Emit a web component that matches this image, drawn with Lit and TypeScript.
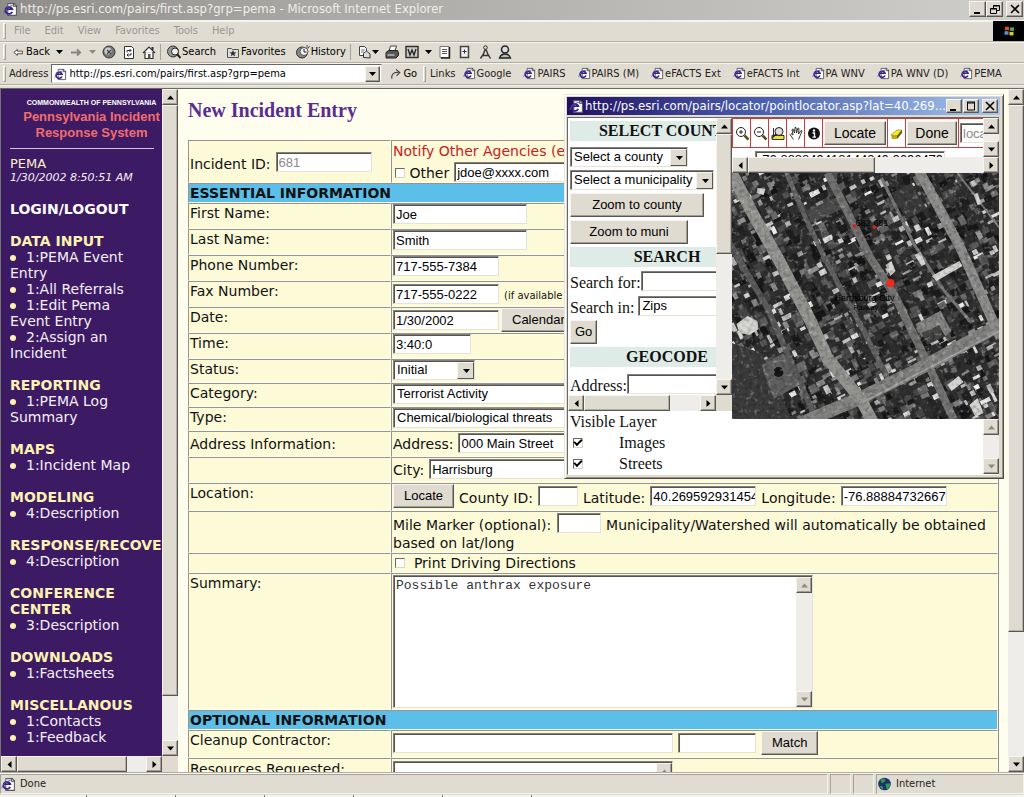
import { LitElement, html, svg, css, nothing } from "lit";
import { customElement, property } from "lit/decorators.js";
import { classMap } from "lit/directives/class-map.js";

/* ---------- shared look ---------- */

const base = css`
  * { box-sizing: border-box; }
  button, input, select, textarea { margin: 0; border-radius: 0; outline: none; color: #000; }
  button {
    font: 13px/16px "Liberation Sans", Arial, sans-serif;
    background: #e0dbd1;
    border: 1px solid;
    border-color: #f8f5f0 #5a5753 #5a5753 #f8f5f0;
    box-shadow: inset -1px -1px #a19c94;
    padding: 0;
    white-space: nowrap;
    flex: none;
  }
  .field, select {
    font: 13px/16px "Liberation Sans", Arial, sans-serif;
    background: #fff;
    height: 20px;
    padding: 1px 0 0 2px;
    border: 1px solid;
    border-color: #84817c #e6e3d6 #e6e3d6 #84817c;
    box-shadow: inset 1px 1px #55524f;
    flex: none;
  }
  select { appearance: none; width: 100%; padding: 0 18px 0 3px; }
  .pick { position: relative; isolation: isolate; display: inline-flex; flex: none; }
  .pick::after {
    content: "";
    position: absolute;
    top: 2px; right: 1px; bottom: 1px;
    width: 15px;
    border: 1px solid;
    border-color: #f8f5f0 #5a5753 #5a5753 #f8f5f0;
    background: #e0dbd1;
    pointer-events: none;
  }
  .pick svg { position: absolute; right: 5px; top: 9px; z-index: 1; pointer-events: none; }
  input[type="checkbox"] {
    appearance: none;
    width: 10px; height: 10px;
    background: #fff;
    border: 1px solid;
    border-color: #6c6964 #d8d5c9 #d8d5c9 #6c6964;
    display: inline-grid;
    place-content: center;
    flex: none;
  }
  input[type="checkbox"]:checked::after {
    content: "";
    width: 6px; height: 3px;
    border: solid #000;
    border-width: 0 0 2px 2px;
    transform: rotate(-45deg);
    margin-bottom: 2px;
  }
`;

const caret = (color = "#000") => html`<svg width="7" height="4" viewBox="0 0 7 4"><path d="M0 0h7L3.5 4z" fill=${color}/></svg>`;

const pageIcon = (size = 14) => html`<svg width=${size} height=${size} viewBox="0 0 14 14">
  <path d="M4.5 1.5h6l2 2v9h-8z" fill="#fff" stroke="#5b5b66"/><path d="M10 1v3h3" fill="none" stroke="#444"/>
  <path d="M8.6 9.2A3.3 3.3 0 1 1 8.7 6.7H3.4" fill="none" stroke="#34218a" stroke-width="1.7"/>
  <path d="M.8 10.5C1.5 7 5 3.6 9 3.3" fill="none" stroke="#5b4bb0" stroke-width=".9"/></svg>`;

/* ---------- scroll bar ---------- */

@customElement("win-scroll")
class WinScroll extends LitElement {
  @property({ type: Boolean, reflect: true }) horizontal = false;
  @property({ type: Boolean }) inactive = false;
  /** share of the track the thumb fills; 0 hides it */
  @property({ type: Number }) thumb = 0;

  static styles = [base, css`
    :host { display: flex; flex-direction: column; width: 16px; flex: none; background: #efedea; min-height: 0; }
    :host([horizontal]) { flex-direction: row; width: auto; height: 16px; min-width: 0; }
    button { width: 16px; height: 16px; display: grid; place-content: center; }
    svg { display: block; }
    .track { flex: 1; display: flex; flex-direction: inherit; min-height: 0; min-width: 0; }
    .thumb {
      background: #e0dbd1;
      border: 1px solid;
      border-color: #f8f5f0 #5a5753 #5a5753 #f8f5f0;
      box-shadow: inset -1px -1px #b4afa6;
    }
  `];

  private arrow(turn: number) {
    return html`<svg width="7" height="7" viewBox="0 0 7 7"><path d="M0 5.5h7L3.5 1.5z"
      fill=${this.inactive ? "#8d8983" : "#000"} transform=${`rotate(${turn} 3.5 3.5)`}/></svg>`;
  }

  render() {
    const size = `flex-basis:${this.thumb}%`;
    return html`
      <button aria-label=${this.horizontal ? "Scroll left" : "Scroll up"}>${this.arrow(this.horizontal ? -90 : 0)}</button>
      <div class="track">${this.thumb ? html`<div class="thumb" style=${size}></div>` : nothing}</div>
      <button aria-label=${this.horizontal ? "Scroll right" : "Scroll down"}>${this.arrow(this.horizontal ? 90 : 180)}</button>`;
  }
}

/* ---------- sidebar ---------- */

const MENU: { title: string; items: string[] }[] = [
  { title: "DATA INPUT", items: ["1:PEMA Event Entry", "1:All Referrals", "1:Edit Pema Event Entry", "2:Assign an Incident"] },
  { title: "REPORTING", items: ["1:PEMA Log Summary"] },
  { title: "MAPS", items: ["1:Incident Map"] },
  { title: "MODELING", items: ["4:Description"] },
  { title: "RESPONSE/RECOVE", items: ["4:Description"] },
  { title: "CONFERENCE CENTER", items: ["3:Description"] },
  { title: "DOWNLOADS", items: ["1:Factsheets"] },
  { title: "MISCELLANOUS", items: ["1:Contacts", "1:Feedback"] },
];

@customElement("side-menu")
class SideMenu extends LitElement {
  static styles = [base, css`
    :host { display: grid; grid-template-columns: 1fr 16px; grid-template-rows: 1fr 16px; width: 178px; flex: none; min-height: 0; border-left: 1px solid #77736e; }
    nav {
      background: #3c1a64; color: #f6f0f8; overflow: hidden; padding: 8px 0 0 9px;
      font: 14px/16px "DejaVu Sans", Verdana, sans-serif;
    }
    .brand { font: bold 13px/16px "Liberation Sans", Arial, sans-serif; color: #f26d6d; text-align: center; padding-left: 11px; white-space: nowrap; }
    .state { color: #fff; font-size: 7px; line-height: 12px; }
    hr { height: 1px; border: 0; background: #cfc4dd; margin: 7px 8px 7px 0; }
    .who { color: #fdf3c8; font-size: 13px; }
    .when { font-size: 11px; line-height: 12px; font-style: italic; }
    a { color: inherit; text-decoration: none; }
    h2 { font-size: 14px; line-height: inherit; margin: 16px 0 0; color: #fdf3b0; }
    h2.login { color: #fff; margin-top: 17px; }
    ul { list-style: none; margin: 0; padding: 0 16px 0 0; }
    li::before { content: ""; display: inline-block; width: 6px; height: 6px; border-radius: 3px; background: #fdf3b0; margin: 0 10px 1px 0; }
    .corner { background: #e0dbd1; }
  `];
  render() {
    return html`
      <nav>
        <div class="brand"><div class="state">COMMONWEALTH OF PENNSYLVANIA</div>Pennsylvania Incident<br>Response System</div>
        <hr>
        <div class="who">PEMA</div>
        <div class="when">1/30/2002 8:50:51 AM</div>
        <h2 class="login"><a href="#login">LOGIN/LOGOUT</a></h2>
        ${MENU.map((g) => html`<h2>${g.title}</h2>
          <ul>${g.items.map((i) => html`<li><a href="#item">${i}</a></li>`)}</ul>`)}
      </nav>
      <win-scroll thumb="93"></win-scroll>
      <win-scroll horizontal thumb="85"></win-scroll>
      <div class="corner"></div>`;
  }
}

/* ---------- incident form ---------- */

@customElement("incident-form")
class IncidentForm extends LitElement {
  static styles = [base, css`
    :host { display: block; flex: 1; min-width: 0; overflow: hidden; background: #fffdee; padding: 12px 9px 0 10px; font: 14px/18px "DejaVu Sans", Verdana, sans-serif; color: #111; }
    h1 { margin: 0 0 20px; font: bold 20px/19px "Liberation Serif", "Times New Roman", serif; color: #5a2d91; }
    form { border-right: 1px solid #8f8d84; }
    .row { display: grid; grid-template-columns: 203px minmax(0, 1fr); }
    .cell { border: 1px solid; border-color: #96948b #fffef4 #fffef4 #96948b; background: #fdfad8; min-height: 26px; padding: 0 1px; min-width: 0; }
    .mid { display: flex; align-items: center; }
    .line { display: flex; align-items: center; gap: 5px; white-space: nowrap; }
    .line > label, .line > span { padding-top: 3px; }
    .slim .cell { min-height: 24px; }
    .wide .cell { min-height: 28px; }
    .tiny .cell { min-height: 20px; }
    .tiny .line > span { padding-top: 0; }
    .top { min-height: 43px; }
    .top .cell { padding-top: 1px; }
    .tall .cell { min-height: 41px; padding-top: 1px; }
    .big .cell { min-height: 137px; }
    h2 { margin: 0; font: bold 14px/18px "DejaVu Sans", Verdana, sans-serif; background: #5bbfea; border: 1px solid; border-color: #96948b #fffef4 #fffef4 #96948b; padding: 0 1px; }
    .warn { color: #c8201e; white-space: nowrap; line-height: 19px; }
    .line > .small { font-size: 10px; padding-top: 5px; }
    .w44 { width: 44px; } .w40 { width: 40px; } .w78 { width: 78px; } .w96 { width: 96px; } .w106 { width: 106px; }
    .w134 { width: 134px; } .w280 { width: 280px; } .w240 { width: 240px; } .w82 { width: 82px; }
    .off { color: #8a8a8a; }
    .btn { height: 24px; padding: 0 10px; }
    .tight { gap: 2px; }
    .area { display: flex; width: 420px; height: 133px; margin-top: 1px; background: #fff; border: 1px solid; border-color: #84817c #e6e3d6 #e6e3d6 #84817c; box-shadow: inset 1px 1px #55524f; padding: 1px 0 0 1px; }
    .short { width: 280px; height: 60px; }
    textarea { flex: 1; min-width: 0; resize: none; border: 0; padding: 1px; background: none; overflow: hidden; font: 13px/16px "Liberation Mono", "Courier New", monospace; color: #333; }
    .mile { vertical-align: text-bottom; margin: 0 1px; }
    .pad { padding-left: 2px; }
  `];

  private row(id: string, label: string, body: unknown, kind = "", mid = false) {
    return html`<div class="row ${kind}">
      <div class=${classMap({ cell: true, mid })}>${label ? html`<label for=${id}>${label}</label>` : nothing}</div>
      <div class="cell">${body}</div></div>`;
  }

  private text(id: string, width: string, value = "", name = "") {
    return html`<input class="field ${width}" id=${id} .value=${value} aria-label=${name || nothing}>`;
  }

  private pick(id: string, width: string, value: string) {
    return html`<span class="pick ${width}"><select id=${id}><option>${value}</option></select>${caret()}</span>`;
  }

  render() {
    return html`
      <h1>New Incident Entry</h1>
      <form @submit=${(e: Event) => e.preventDefault()}>
        <div class="row top">
          <div class="cell mid"><div class="line"><label for="iid">Incident ID:</label><input class="field w96 off" id="iid" readonly .value=${"681"}></div></div>
          <div class="cell">
            <div class="warn">Notify Other Agencies (e</div>
            <div class="line"><span class="pad"><input type="checkbox" id="other"> <label for="other">Other</label></span>${this.text("mail", "w134", "jdoe@xxxx.com", "Other agency email")}</div>
          </div>
        </div>
        <h2>ESSENTIAL INFORMATION</h2>
        ${this.row("first", "First Name:", this.text("first", "w134", "Joe"))}
        ${this.row("last", "Last Name:", this.text("last", "w134", "Smith"))}
        ${this.row("phone", "Phone Number:", this.text("phone", "w106", "717-555-7384"))}
        ${this.row("fax", "Fax Number:", html`<div class="line">${this.text("fax", "w106", "717-555-0222")}<span class="small">(if available</span></div>`)}
        ${this.row("date", "Date:", html`<div class="line tight">${this.text("date", "w106", "1/30/2002")}<button class="btn" type="button">Calendar</button></div>`)}
        ${this.row("time", "Time:", this.text("time", "w78", "3:40:0"))}
        ${this.row("status", "Status:", this.pick("status", "w82", "Initial"), "slim")}
        ${this.row("cat", "Category:", this.pick("cat", "w240", "Terrorist Activity"), "slim")}
        ${this.row("type", "Type:", this.pick("type", "w240", "Chemical/biological threats"), "slim")}
        ${this.row("addr", "Address Information:", html`<div class="line"><label for="addr">Address:</label>${this.text("addr", "w134", "000 Main Street")}</div>`, "", true)}
        ${this.row("city", "", html`<div class="line"><label for="city">City:</label>${this.text("city", "w240", "Harrisburg")}</div>`, "")}
        ${this.row("county", "Location:", html`<div class="line"><button class="btn" type="button">Locate</button>
          <label for="county">County ID:</label>${this.text("county", "w40")}
          <label for="lat">Latitude:</label>${this.text("lat", "w106", "40.269592931454")}
          <label for="lon">Longitude:</label>${this.text("lon", "w106", "-76.88884732667000")}</div>`, "wide")}
        ${this.row("mile", "", html`<label for="mile">Mile Marker (optional):</label>
          <input class="field w44 mile" id="mile"> Municipality/Watershed will automatically be obtained based on lat/long`, "tall")}
        ${this.row("dir", "", html`<div class="line"><span class="pad"><input type="checkbox" id="dir">&nbsp; <label for="dir">Print Driving Directions</label></span></div>`, "tiny")}
        ${this.row("sum", "Summary:", html`<div class="area"><textarea id="sum" .value=${"Possible anthrax exposure"}></textarea><win-scroll inactive></win-scroll></div>`, "big")}
        <h2>OPTIONAL INFORMATION</h2>
        ${this.row("clean", "Cleanup Contractor:", html`<div class="line">${this.text("clean", "w280")}${this.text("code", "w78", "", "Contractor code")}<button class="btn" type="button">Match</button></div>`, "wide")}
        ${this.row("res", "Resources Requested:", html`<div class="area short"><textarea id="res"></textarea><win-scroll inactive></win-scroll></div>`, "tall")}
      </form>`;
  }
}

/* ---------- aerial map ---------- */

type Street = { d: string; w: number; c: string };
const STREETS: Street[] = [
  { d: "M53-5 72 40 93 85 129 152 156 205", w: 5, c: "#626261" },
  { d: "M150 5 183 72 213 118 240 150", w: 3, c: "#757574" },
  { d: "M-2 70 36 135 60 190 82 240", w: 6, c: "#5a5a5a" },
  { d: "M226 0 268 55", w: 2, c: "#828281" },
  { d: "M96 0 109 25 139 85 163 122 196 190 222 246", w: 8, c: "#727271" },
  { d: "M70 250 129 225 193 193 270 151", w: 13, c: "#828280" },
  { d: "M186-5 229 75 269 165", w: 10, c: "#8c8c8a" },
  { d: "M-4-8 22 42 49 90 79 148 96 185 129 226 142 250", w: 12, c: "#92928f" },
];

function buildings() {
  let seed = 20021;
  const rnd = () => ((seed = (seed * 1103515245 + 12345) % 2147483648) / 2147483648);
  const out: unknown[] = [];
  for (let u = -200; u < 330; u += 9) {
    for (let v = -60; v < 360; v += 7) {
      const a = -0.47;
      const x = u * Math.cos(a) - v * Math.sin(a) + (rnd() - 0.5) * 6;
      const y = u * Math.sin(a) + v * Math.cos(a) + (rnd() - 0.5) * 6;
      const r = rnd(), w = 4 + rnd() * 7, h = 3 + rnd() * 5, t = rnd();
      const turn = rnd() < 0.75 ? -27 : 63;
      if (x < -8 || y < -8 || x > 276 || y > 254) continue;
      const g = r < 0.46 ? 22 + t * 28 : r < 0.7 ? 66 + t * 44 : r < 0.86 ? 110 + t * 50 : 180 + t * 65;
      out.push(svg`<rect x=${x.toFixed(1)} y=${y.toFixed(1)} width=${w.toFixed(1)} height=${(r > 0.7 ? h * 0.7 : h + 2).toFixed(1)}
        fill=${`rgb(${g | 0},${g | 0},${g | 0})`} transform=${`rotate(${turn} ${x.toFixed(1)} ${y.toFixed(1)})`}/>`);
    }
  }
  return out;
}

const ROOFS = [
  "M5 151 16 143 26 148 27 156 18 162 8 160z", "M200 103 228 88 231 93 205 108z", "M182 53 187 51 190 56 185 59z",
  "M216 212 227 203 232 209 220 218z", "M26 15 34 16 32 22 25 20z", "M154 92 160 88 164 98 159 103z",
  "M242 21 246 20 250 31 246 32z", "M183 82 189 79 194 91 190 93z", "M238 232 246 225 252 240 244 244z",
];

const aerial = html`<svg class="map" viewBox="0 0 268 246" preserveAspectRatio="xMidYMid slice" role="img" aria-label="Aerial map of Harrisburg">
  <defs>
    <filter id="grain" x="0" y="0" width="100%" height="100%"><feTurbulence type="fractalNoise" baseFrequency=".24" numOctaves="3" seed="4"/>
      <feColorMatrix values="0 0 0 0 0  0 0 0 0 0  0 0 0 0 0  3 0 0 0 -1.3"/></filter>
    <filter id="spark" x="0" y="0" width="100%" height="100%"><feTurbulence type="fractalNoise" baseFrequency=".22" numOctaves="2" seed="9"/>
      <feColorMatrix values="0 0 0 0 .7  0 0 0 0 .7  0 0 0 0 .7  0 4 0 0 -2.3"/></filter>
    <filter id="soft"><feGaussianBlur stdDeviation=".5"/></filter>
  </defs>
  <rect width="268" height="246" fill="#303030"/>
  <g filter="url(#soft)">
    ${buildings()}
    <path d="M160 20 180 10 195 35 175 46z M0 170 30 180 60 246 0 246z" fill="#3a3a3a"/>
    <path d="M74 38 106 24 110 36 80 50z" fill="#4c4c4c"/>
    <path d="M30 192 52 180 68 212 42 226z" fill="#5e5e5e"/><circle cx="47" cy="199" r="5" fill="#151515"/>
    ${STREETS.map((s) => svg`<path d=${s.d} fill="none" stroke=${s.c} stroke-width=${s.w}/>`)}
    <path d="M184 151 209 138 220 158 214 163 208 154 190 164z" fill="#828280"/><path d="M190 160 208 152 212 164 196 172z" fill="#444"/>
    <path d="M132 229 270 157" stroke="#a8a8a6" stroke-width="1.5"/>
    <path d=${ROOFS.join(" ")} fill="#d6d6d3"/>
  </g>
  <rect width="268" height="246" filter="url(#grain)" opacity=".2"/>
  <rect width="268" height="246" filter="url(#spark)" opacity=".35"/>
  <circle cx="123" cy="53" r="2" fill="#d3222a"/><circle cx="143" cy="54" r="2" fill="#d3222a"/>
  <circle cx="159" cy="110" r="4" fill="#f2281c"/>
  <g font-family="Liberation Sans, sans-serif" font-size="9" fill="#000"><text x="124" y="53">682</text><text x="142" y="53">681</text>
  <text x="103" y="128">Harrisburg City</text><text x="122" y="137" font-size="7">Railway</text></g>
</svg>`;

/* ---------- locator window ---------- */

const TOOLS = [
  { name: "Zoom in", art: svg`<circle cx="6" cy="6" r="4.5" fill="#fff" stroke="#222"/><path d="M4 6h4M6 4v4" stroke="#222"/><path d="m9.5 9.5 4 4" stroke="#5a4a10" stroke-width="2.5"/>` },
  { name: "Zoom out", art: svg`<circle cx="6" cy="6" r="4.5" fill="#fff" stroke="#222"/><path d="M4 6h4" stroke="#222"/><path d="m9.5 9.5 4 4" stroke="#5a4a10" stroke-width="2.5"/>` },
  { name: "Full extent", art: svg`<path d="M1 9.5h12v4H1z" fill="#f5e12c" stroke="#333"/><path d="M2.5 2v8" stroke="#333"/><circle cx="8" cy="5.5" r="4" fill="#ddd" stroke="#222"/><path d="m5 8-4 4" stroke="#222" stroke-width="1.5"/>` },
  { name: "Pan", art: svg`<path d="M4.5 13.5 1 8.5l1-1 2 1.5L3 3.5l1-.5 1.5 4L6 1.5h1L7.5 7 9 2l1 .5L9.5 8 12 4.5l1 .5-2 5-1.5 3.5" fill="#fff" stroke="#222" stroke-width=".9"/>` },
  { name: "Identify", art: svg`<circle cx="7" cy="7.5" r="6" fill="#111"/><circle cx="7" cy="4.5" r="1.2" fill="#fff"/><path d="M5.5 7h2v4M5.5 11.2H9" stroke="#fff" stroke-width="1.3" fill="none"/>` },
];

@customElement("locator-window")
class LocatorWindow extends LitElement {
  static styles = [base, css`
    :host {
      display: flex; flex-direction: column; background: #e0dbd1; padding: 2px 3px 3px 2px;
      border: 1px solid; border-color: #e9e5dc #4c4946 #4c4946 #e9e5dc; box-shadow: inset 1px 1px #fff, inset -1px -1px #98948c;
      font: 16px/20px "Liberation Serif", "Times New Roman", serif; color: #111;
    }
    .title { display: flex; align-items: center; gap: 1px; height: 18px; flex: none; padding: 0 2px; color: #fff; background: linear-gradient(90deg, #211060, #4a5fae 45%, #a9c8ee);
      font: 13px/16px "DejaVu Sans Condensed", Tahoma, sans-serif; }
    .title .name { flex: 1; min-width: 0; white-space: nowrap; }
    .title button { width: 16px; height: 14px; display: grid; place-content: center; }
    .title button:last-child { margin-left: 2px; }
    .body { flex: 1; display: grid; grid-template-columns: 164px minmax(0, 1fr); min-height: 0; margin: 2px 1px 0 0; background: #fff; border: 1px solid; border-color: #6b6863 #fff #fff #6b6863; border-right: 0; }
    .col { display: flex; flex-direction: column; min-width: 0; min-height: 0; }
    .side { display: grid; grid-template-columns: minmax(0, 1fr) 16px; grid-template-rows: 277px 16px; }
    .pane { overflow: hidden; padding: 3px 0 0 2px; }
    .inner { width: 194px; display: flex; flex-direction: column; align-items: flex-start; gap: 3px; }
    .inner h3 { margin: 0; width: 100%; background: #dfebe7; text-align: center; font: bold 16px/20px "Liberation Serif", serif; }
    .inner .gap { margin-top: 3px; }
    .inner select { height: 20px; }
    .entry { display: flex; align-items: center; height: 22px; }
    .entry label { padding-top: 4px; }
    .entry .spaced { margin-left: 4px; }
    .w118 { width: 118px; } .w144 { width: 144px; } .w134 { width: 134px; }
    .btn { height: 24px; padding: 0 4px; }
    .corner { background: #e0dbd1; }
    .layers { padding: 1px 0 0 2px; }
    .layer { display: flex; align-items: center; gap: 36px; height: 21px; padding-left: 3px; }
    .tools { display: flex; height: 39px; }
    .toolpane { flex: 1; min-width: 0; overflow: hidden; }
    .bar { display: flex; gap: 1px; padding: 1px 0 1px 1px; background: #cf3a3a; height: 30px; width: 320px; }
    .bar > * { background: #fff; display: flex; align-items: center; justify-content: center; padding: 0 1px; flex: none; }
    .tool { width: 17px; padding: 0; border: 0; box-shadow: none; }
    .locate { width: 62px; font-size: 14px; } .done { width: 50px; font-size: 14px; }
    .mode { color: #8a8a8a; }
    .coords { width: 190px; height: 16px; margin: 3px 0 0 23px; display: block; }
    .map { width: 100%; height: 246px; display: block; flex: none; }
    .foot { flex: 1; display: flex; justify-content: flex-end; min-height: 0; }
  `];
  private pick(name: string, width: string, value: string) {
    return html`<span class="pick ${width}"><select aria-label=${name}><option>${value}</option></select>${caret()}</span>`;
  }
  render() {
    return html`
      <div class="title">${pageIcon(15)}<span class="name">http://ps.esri.com/pairs/locator/pointlocator.asp?lat=40.269...</span>
        <button aria-label="Minimize"><svg width="10" height="10"><path d="M1 9h6" stroke="#000" stroke-width="2"/></svg></button>
        <button aria-label="Maximize"><svg width="10" height="10"><path d="M1 1h8M1 2h8M1.5 1v8h7V1" fill="none" stroke="#000"/></svg></button>
        <button aria-label="Close"><svg width="10" height="10"><path d="m1 1 8 8m0-8-8 8" stroke="#000" stroke-width="1.6"/></svg></button>
      </div>
      <div class="body">
        <div class="col">
          <div class="side">
            <div class="pane"><div class="inner">
              <h3>SELECT COUNTY</h3>
              <span class="pick w118 gap"><select aria-label="County"><option>Select a county</option></select>${caret()}</span>
              ${this.pick("Municipality", "w144", "Select a municipality")}
              <button class="btn w134">Zoom to county</button>
              <button class="btn w118">Zoom to muni</button>
              <h3>SEARCH</h3>
              <div class="entry"><label for="q">Search for:</label><input class="field w118" id="q"></div>
              <div class="entry"><label for="in">Search in:</label><span class="pick w118 spaced"><select id="in"><option>Zips</option></select></span></div>
              <button class="btn">Go</button>
              <h3>GEOCODE</h3>
              <div class="entry gap"><label for="ad">Address:</label><input class="field w118" id="ad"></div>
            </div></div>
            <win-scroll thumb="49"></win-scroll>
            <win-scroll horizontal thumb="74"></win-scroll>
            <div class="corner"></div>
          </div>
          <div class="layers">
            <div>Visible Layer</div>
            <div class="layer"><input type="checkbox" id="im" checked><label for="im">Images</label></div>
            <div class="layer"><input type="checkbox" id="st" checked><label for="st">Streets</label></div>
          </div>
        </div>
        <div class="col">
          <div class="tools">
            <div class="toolpane">
              <div class="bar">
                ${TOOLS.map((t) => html`<button class="tool" aria-label=${t.name}><svg width="14" height="15" viewBox="0 0 14 15">${t.art}</svg></button>`)}
                <span><button class="btn locate">Locate</button></span>
                <button class="tool" aria-label="Erase"><svg width="14" height="15" viewBox="0 0 14 15"><path d="m1 9 6-5h5l-5 6z" fill="#f6e928" stroke="#8a7d10" stroke-width=".6"/><path d="M1 9h6v4H2z" fill="#bba90f"/><path d="m7 10 5-6v3l-5 6z" fill="#5f5608"/></svg></button>
                <span><button class="btn done">Done</button></span>
                <span><input class="field w118 mode" aria-label="Mode" .value=${"locate"}></span>
              </div>
              <input class="field coords" aria-label="Coordinates" .value=${"-76.888849418144240.2696479"}>
            </div>
            <win-scroll></win-scroll>
          </div>
          <win-scroll horizontal thumb="54"></win-scroll>
          ${aerial}
          <div class="foot"><win-scroll inactive></win-scroll></div>
        </div>
      </div>`;
  }
}

/* ---------- browser shell ---------- */

const ART = {
  back: svg`<path d="M1 7.5 5 4v2h6v3H5v2z" fill="#fff" stroke="#333"/>`,
  fwd: svg`<path d="M2 7.5h9M8 4.5l3 3-3 3" fill="none" stroke="#88847d" stroke-width="2"/>`,
  stop: svg`<circle cx="7" cy="7" r="6" fill="#777" stroke="#333"/><circle cx="6" cy="6" r="3.5" fill="#ccc"/><path d="m5 5 4 4m0-4-4 4" stroke="#444" stroke-width="1.3"/>`,
  refresh: svg`<path d="M2.5 1.5h7l2 2v10h-9z" fill="#fff" stroke="#333"/><path d="M5 7.5V5.5h4M7.5 4l1.5 1.5L7.5 7M9 8v2H5M6.5 8.5 5 10l1.5 1.5" fill="none" stroke="#333"/>`,
  home: svg`<path d="M1 8 7 2l6 6M3 7v6.5h8V7" fill="#fff" stroke="#333" stroke-width="1.2"/><path d="M10.5 2v3" stroke="#333" stroke-width="2"/><path d="M6 9h2.5v4.5H6z" fill="#555"/>`,
  search: svg`<circle cx="6" cy="6.5" r="5.5" fill="#999" stroke="#333"/><circle cx="8" cy="6.5" r="3.5" fill="#eee" stroke="#222"/><path d="m10.5 9.5 3 3.5" stroke="#222" stroke-width="2"/>`,
  fav: svg`<path d="M1.5 3.5h4l1 1h6v8h-11z" fill="#ddd" stroke="#555"/><path d="m7 5 1 2.3 2.5.1-2 1.6.8 2.3L7 10l-2.3 1.3.8-2.3-2-1.6L6 7.3z" fill="#333"/>`,
  hist: svg`<circle cx="6" cy="7.5" r="5.5" fill="#888" stroke="#333"/><circle cx="8" cy="6.5" r="4" fill="#f3f3f3" stroke="#555"/><path d="M8 4v3h2.5" fill="none" stroke="#222"/><path d="M11 0v3M13.5 1 12 3.5" stroke="#555"/>`,
  mail: svg`<path d="M2.5 1.5h5l2 2v7h-7z" fill="#fff" stroke="#444"/><path d="M4 5h4M4 7h3" stroke="#777"/><path d="M6.5 12.5v-4L9.5 6 13 9v4z" fill="#ddd" stroke="#333"/>`,
  print: svg`<path d="m4 6 1.5-5h6L10 6" fill="#fff" stroke="#444"/><path d="M1 7.5 3.5 5.5h9l1 2v3L11 13H1z" fill="#555" stroke="#222"/><path d="M2.5 10h7" stroke="#eee"/>`,
  word: svg`<path d="M1 1.5h12v11H1z" fill="#ccc" stroke="#333" stroke-width="1.5"/><path d="m3 4 2 6 2-5 2 5 2-6" fill="none" stroke="#222" stroke-width="1.3"/>`,
  note: svg`<path d="M2 1.5h9v11H2z" fill="#fff" stroke="#777"/><path d="M11.5 2v11H3" fill="none" stroke="#222" stroke-width="1.5"/><path d="M4 4.5h5M4 6.5h5M4 8.5h5" stroke="#555"/>`,
  card: svg`<path d="M2.5 1.5h8v11h-8z" fill="#eee" stroke="#444" stroke-width="1.5"/><path d="M6.5 4.5v4M4.5 6.5h4" stroke="#333"/>`,
  run: svg`<circle cx="7.5" cy="2.5" r="1.8" fill="none" stroke="#333"/><path d="M7 4.5 5.5 9 2.5 13.5M8 4.5l2 5 2.500 4M4.500 10.500h7" fill="none" stroke="#333" stroke-width="1.4"/>`,
  buddy: svg`<circle cx="7" cy="4.5" r="3.5" fill="#ddd" stroke="#222" stroke-width="1.5"/><path d="M1.5 13c1-3 3-4 5.5-4s4.5 1 5.5 4z" fill="#bbb" stroke="#222" stroke-width="1.3"/>`,
  go: svg`<path d="M2 12C1 8 4 4.5 9 5.5M6.5 2 10.5 5.5 7 9" fill="none" stroke="#444" stroke-width="1.3"/>`,
};
const icon = (k: keyof typeof ART, w = 14) => html`<svg width=${w} height="14" viewBox="0 0 14 14">${ART[k]}</svg>`;

const LINKS = ["Google", "PAIRS", "PAIRS (M)", "eFACTS Ext", "eFACTS Int", "PA WNV", "PA WNV (D)", "PEMA"];

@customElement("app-root")
class AppRoot extends LitElement {
  static styles = [base, css`
    :host { display: flex; flex-direction: column; height: 100vh; min-height: 0; overflow: hidden; position: relative; background: #e1dcd1; font: 11px/16px "DejaVu Sans Condensed", Tahoma, sans-serif; color: #222; }
    svg { flex: none; display: block; }
    .title { display: flex; align-items: center; gap: 2px; height: 21px; flex: none; padding: 0 1px 2px 3px; background: linear-gradient(90deg, #8e8d89, #a9a8a4 30%, #cfcecb); color: #efeeea; border-bottom: 1px solid #f4f2ec; font-size: 13px; }
    .title .name { flex: 1; white-space: nowrap; }
    .title button { width: 17px; height: 16px; display: grid; place-content: center; margin-right: -2px; }
    .title button:last-child { margin: 0 0 0 3px; }
    .band { display: flex; align-items: center; height: 21px; flex: none; border-bottom: 1px solid #b2aea5; box-shadow: inset 0 1px #f6f3ec; padding-left: 3px; white-space: nowrap; }
    .grip { width: 3px; height: 16px; border: 1px solid; border-color: #fff #a6a29a #a6a29a #fff; flex: none; }
    .menu { gap: 14px; color: #9b978f; }
    .menu .grip { margin-right: -6px; }
    .menu a, .links a { color: inherit; text-decoration: none; }
    .brand { margin-left: auto; width: 31px; height: 20px; background: #000; display: grid; place-content: center; }
    .flat { background: none; border: 0; box-shadow: none; font: inherit; display: flex; align-items: center; gap: 1px; }
    .toolbar { padding-left: 3px; }
    .toolbar .flat { margin-left: 6px; }
    .toolbar .lead { margin-left: 7px; }
    .toolbar .far { margin-left: 10px; }
    .sep { width: 1px; height: 16px; background: #a6a29a; margin-left: 4px; }
    .address { height: 22px; }
    .address > label { margin: 0 3px 0 3px; }
    .combo { display: flex; align-items: center; gap: 2px; width: 331px; height: 19px; padding: 1px 1px 0 2px; background: #fff; border: 1px solid; border-color: #6b6863 #e6e3d6 #e6e3d6 #6b6863; }
    .combo input { flex: 1; min-width: 0; border: 0; padding: 0; background: none; font: inherit; }
    .combo button { width: 15px; height: 16px; display: grid; place-content: center; }
    .go { margin: 0 6px 0 8px; gap: 0; }
    .links { display: flex; gap: 12px; margin-left: 7px; }
    .caption { margin-left: 4px; }
    .links a { display: flex; align-items: center; gap: 1px; }
    .rim { height: 4px; flex: none; border-bottom: 1px solid #6b6863; box-shadow: inset 0 1px #f6f3ec; }
    main { flex: 1; display: flex; min-height: 0; }
    .status { display: flex; gap: 2px; height: 22px; flex: none; border-top: 1px solid #b2aea5; padding-top: 1px; box-shadow: inset 0 1px #f8f6f0; }
    .status > * { border: 1px solid; border-color: #a6a29a #f4f1ea #f4f1ea #a6a29a; width: 21px; display: flex; align-items: center; gap: 4px; }
    .status .msg { flex: 1; }
    .status .zone { width: 148px; }
    .task { height: 3px; flex: none; display: flex; gap: 2px; background: #f6f4ee; border-top: 1px solid #e1dcd1; }
    .task i { width: 87px; border-right: 1px solid #77736e; }
    locator-window { position: absolute; z-index: 5; left: 564px; top: 94px; width: 440px; height: 385px; }
  `];
  render() {
    return html`
      <div class="title">${pageIcon(15)}<span class="name">http://ps.esri.com/pairs/first.asp?grp=pema - Microsoft Internet Explorer</span>
        <button aria-label="Minimize"><svg width="10" height="10"><path d="M1 9h6" stroke="#000" stroke-width="2"/></svg></button>
        <button aria-label="Restore"><svg width="10" height="10"><path d="M3.5 4V1.5h6v5H7M3 2h6M.5 4.5h6v5h-6zM1 5h6" fill="none" stroke="#000"/></svg></button>
        <button aria-label="Close"><svg width="10" height="10"><path d="m1 1 8 8m0-8-8 8" stroke="#000" stroke-width="1.6"/></svg></button>
      </div>
      <div class="band menu"><span class="grip"></span>
        ${["File", "Edit", "View", "Favorites", "Tools", "Help"].map((m) => html`<a href="#menu">${m}</a>`)}
        <span class="brand"><svg width="14" height="12" viewBox="0 0 14 12"><path d="M3 2q2-1 4 0v3.5q-2-1-4 0z" fill="#d6522c"/><path d="M8 2q2 1 4 0v3.5q-2 1-4 0z" fill="#5aa83b"/><path d="M2.5 6.5q2-1 4 0V10q-2-1-4 0z" fill="#5a8fd8"/><path d="M7.5 6.5q2 1 4 0V10q-2 1-4 0z" fill="#e3c33c"/></svg></span>
      </div>
      <div class="band toolbar"><span class="grip"></span>
        <button class="flat lead">${icon("back", 12)}Back</button><button class="flat" aria-label="Back list">${caret()}</button>
        <button class="flat" aria-label="Forward">${icon("fwd")}</button><button class="flat" aria-label="Forward list">${caret("#8d8983")}</button>
        <button class="flat" aria-label="Stop">${icon("stop")}</button><button class="flat" aria-label="Refresh">${icon("refresh")}</button>
        <button class="flat" aria-label="Home">${icon("home")}</button><span class="sep"></span>
        <button class="flat">${icon("search")}Search</button><button class="flat far">${icon("fav")}Favorites</button><button class="flat far">${icon("hist")}History</button>
        <span class="sep"></span>
        <button class="flat" aria-label="Mail">${icon("mail")}${caret()}</button><button class="flat" aria-label="Print">${icon("print")}</button>
        <button class="flat" aria-label="Edit">${icon("word")}</button><button class="flat" aria-label="Edit list">${caret()}</button>
        <button class="flat" aria-label="Discuss">${icon("note")}</button><button class="flat" aria-label="Notes">${icon("card")}</button>
        <button class="flat" aria-label="Messenger">${icon("run")}</button><button class="flat" aria-label="Buddies">${icon("buddy")}</button>
      </div>
      <div class="band address"><span class="grip"></span>
        <label for="url">Address</label>
        <div class="combo">${pageIcon(13)}<input id="url" .value=${"http://ps.esri.com/pairs/first.asp?grp=pema"}><button aria-label="Address list">${caret()}</button></div>
        <button class="flat go">${icon("go", 13)}Go</button><span class="grip"></span>
        <span class="caption">Links</span>
        <div class="links">${LINKS.map((l) => html`<a href="#link">${pageIcon(13)}${l}</a>`)}</div>
      </div>
      <div class="rim"></div>
      <main><side-menu></side-menu><incident-form></incident-form><win-scroll thumb="81"></win-scroll></main>
      <div class="status"><div class="msg">${pageIcon(15)}Done</div><div></div><div></div>
        <div class="zone"><svg width="15" height="14" viewBox="0 0 14 14"><circle cx="7" cy="7" r="6.3" fill="#20306e"/><path d="M3 3q3-3 5 0-1 3-4 3zM8 7q5-2 5 1-2 5-4 4zM2 9q3-1 4 2l-1 2z" fill="#2d9a51"/></svg>Internet</div></div>
      <div class="task">${[0, 1, 2, 3, 4, 5].map(() => html`<i></i>`)}</div>
      <locator-window></locator-window>`;
  }
}
